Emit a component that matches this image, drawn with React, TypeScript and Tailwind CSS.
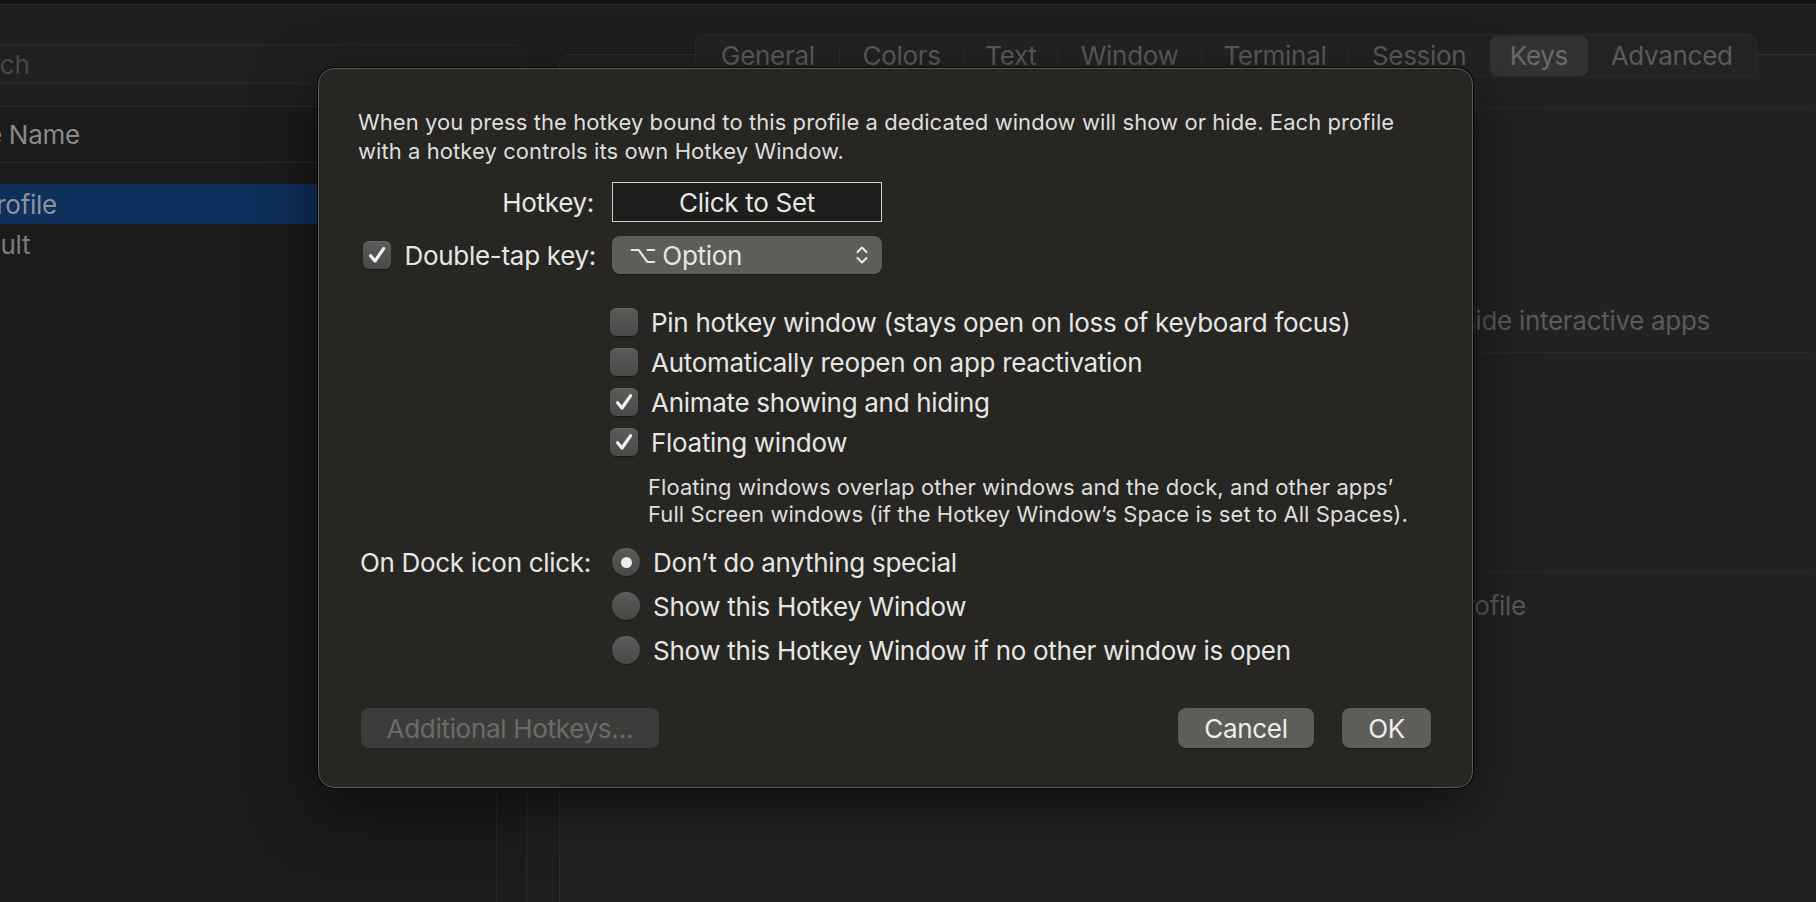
import React from "react";

const tabs = [
  { label: "General", w: "w-[142px]", sep: false },
  { label: "Colors", w: "w-[125px]", sep: true },
  { label: "Text", w: "w-[94px]", sep: true },
  { label: "Window", w: "w-[144px]", sep: true },
  { label: "Terminal", w: "w-[147px]", sep: true },
  { label: "Session", w: "w-[142px]", sep: true },
  { label: "Keys", w: "w-[99px]", sep: false, active: true },
  { label: "Advanced", w: "w-[167px]", sep: false },
];

function CheckMark() {
  return (
    <svg viewBox="0 0 28 28" className="h-[28px] w-[28px]">
      <path
        d="M7.6 14.8l4.4 5.2 8.6-12.4"
        fill="none"
        stroke="#f3f3f1"
        strokeWidth="3.2"
        strokeLinecap="round"
        strokeLinejoin="round"
      />
    </svg>
  );
}

function Checkbox({ checked }: { checked?: boolean }) {
  return (
    <span className="flex h-[28px] w-[28px] shrink-0 items-center justify-center rounded-[6px] bg-gradient-to-b from-[#5b5b59] to-[#4a4a48] shadow-[inset_0_1px_0_rgba(255,255,255,0.07),0_1px_1px_rgba(0,0,0,0.45)]">
      {checked && <CheckMark />}
    </span>
  );
}

function Radio({ on }: { on?: boolean }) {
  return (
    <span className="flex h-[28px] w-[28px] shrink-0 items-center justify-center rounded-full bg-gradient-to-b from-[#5b5b59] to-[#474745] shadow-[inset_0_1px_0_rgba(255,255,255,0.07),0_1px_1px_rgba(0,0,0,0.45)]">
      {on && <span className="h-[11px] w-[11px] rounded-full bg-[#ededeb]" />}
    </span>
  );
}

function UpDown() {
  return (
    <svg viewBox="0 0 14 24" className="h-[24px] w-[14px]">
      <path
        d="M2.5 9L7 4.5 11.5 9M2.5 15L7 19.5 11.5 15"
        fill="none"
        stroke="#ececea"
        strokeWidth="2"
        strokeLinecap="round"
        strokeLinejoin="round"
      />
    </svg>
  );
}

function HotkeyDialog() {
  return (
    <div className="absolute left-[318px] top-[68px] h-[720px] w-[1155px] rounded-[16px] border border-[#5a5956] bg-[#272623] pl-[39px] pr-[41px] pt-[39px] text-[26px] text-[#e6e6e4] shadow-[0_0_0_1px_rgba(0,0,0,0.7),0_18px_60px_rgba(0,0,0,0.55)]">
      <p className="whitespace-nowrap text-[22px] leading-[29px] tracking-[0.07px] text-[#dededc]">
        When you press the hotkey bound to this profile a dedicated window will show or hide. Each profile
        <br />
        with a hotkey controls its own Hotkey Window.
      </p>

      {/* Hotkey */}
      <div className="mt-[16px] flex h-[40px] items-center">
        <span className="w-[236px] text-right">Hotkey:</span>
        <div className="ml-[18px] flex h-[40px] w-[270px] items-center justify-center border-[1.5px] border-[#cfcfcd] bg-[#1e1e1d]">
          Click to Set
        </div>
      </div>

      {/* Double-tap */}
      <div className="mt-[14px] flex h-[38px] items-center">
        <div className="flex w-[238px] items-center justify-end gap-[14px]">
          <Checkbox checked />
          <span>Double-tap key:</span>
        </div>
        <div className="ml-[16px] flex h-[38px] w-[270px] items-center justify-between rounded-[8px] bg-[#5d5d59] pl-[17px] pr-[13px] shadow-[0_1px_1px_rgba(0,0,0,0.4)]">
          <span className="flex items-center gap-[6px]">
            <span className="[font-family:'DejaVu_Sans',sans-serif] text-[24px]">⌥</span>
            <span>Option</span>
          </span>
          <UpDown />
        </div>
      </div>

      {/* Options */}
      <div className="mt-[28px] flex flex-col pl-[252px]">
        {[
          { label: "Pin hotkey window (stays open on loss of keyboard focus)", on: false },
          { label: "Automatically reopen on app reactivation", on: false },
          { label: "Animate showing and hiding", on: true },
          { label: "Floating window", on: true },
        ].map((o) => (
          <div key={o.label} className="flex h-[40px] items-center gap-[13px]">
            <Checkbox checked={o.on} />
            <span>{o.label}</span>
          </div>
        ))}
      </div>
      <p className="mt-[12px] whitespace-nowrap pl-[290px] text-[22px] leading-[27px] tracking-[0.07px] text-[#dededc]">
        Floating windows overlap other windows and the dock, and other apps’
        <br />
        Full Screen windows (if the Hotkey Window’s Space is set to All Spaces).
      </p>

      {/* Dock icon */}
      <div className="mt-[12px] flex">
        <span className="flex h-[44px] w-[236px] items-center justify-end whitespace-nowrap pr-[3px]">
          On Dock icon click:
        </span>
        <div className="ml-[18px] flex flex-col">
          {[
            { label: "Don’t do anything special", on: true },
            { label: "Show this Hotkey Window", on: false },
            { label: "Show this Hotkey Window if no other window is open", on: false },
          ].map((r) => (
            <div key={r.label} className="flex h-[44px] items-center gap-[13px]">
              <Radio on={r.on} />
              <span>{r.label}</span>
            </div>
          ))}
        </div>
      </div>

      {/* Buttons */}
      <div className="mt-[36px] flex items-center">
        <button className="ml-[3px] h-[40px] w-[298px] rounded-[8px] bg-[#3d3c3a] text-[#6c6b69]">
          Additional Hotkeys…
        </button>
        <div className="ml-auto flex gap-[28px]">
          <button className="h-[40px] w-[136px] rounded-[8px] bg-[#5d5d59] text-[#ededeb] shadow-[0_1px_1px_rgba(0,0,0,0.4)]">
            Cancel
          </button>
          <button className="h-[40px] w-[89px] rounded-[8px] bg-[#5d5d59] text-[#ededeb] shadow-[0_1px_1px_rgba(0,0,0,0.4)]">
            OK
          </button>
        </div>
      </div>
    </div>
  );
}

export default function App() {
  return (
    <div className="relative h-[902px] w-[1816px] overflow-hidden bg-[#1e1e1e] text-[26px] tracking-[-0.3px] [font-family:Inter,'Liberation_Sans',sans-serif]">
      <div className="h-[5px] border-b border-[#2a2a2a] bg-[#121212]" />
      <div className="flex h-[897px]">
        {/* Profiles list */}
        <aside className="flex w-[527px] shrink-0 flex-col">
          <div className="mt-[39px] flex h-[40px] items-center overflow-hidden rounded-r-[10px] border border-l-0 border-[#292929] bg-[#202020]">
            <span className="-ml-[55px] whitespace-nowrap text-[#474747]">Search</span>
          </div>
          <div className="mt-[22px] flex flex-1 border-t border-[#2a2a2a] bg-[#1b1b1b]">
            <div className="w-[497px] overflow-hidden border-r border-[#272727]">
              <div className="flex h-[56px] items-center border-b border-[#2c2c2c]">
                <span className="-ml-[75px] whitespace-nowrap text-[#8a8a8a]">Profile Name</span>
              </div>
              <div className="mt-[21px]">
                <div className="flex h-[40px] items-center bg-[#0f2f5c]">
                  <span className="-ml-[20px] whitespace-nowrap text-[#8d939d]">Profile</span>
                </div>
                <div className="flex h-[40px] items-center">
                  <span className="-ml-[56px] whitespace-nowrap text-[#7b7b7b]">Default</span>
                </div>
              </div>
            </div>
            <div className="flex-1 border-r border-[#2c2c2c] bg-[#1c1c1c]" />
          </div>
        </aside>

        {/* Profile settings */}
        <main className="ml-[32px] mt-[49px] flex flex-1 flex-col rounded-tl-[10px] border-l border-t border-[#2d2d2d] bg-[#222222]">
          <nav className="-mt-[21px] ml-[135px] flex h-[43px] w-[1062px] items-center rounded-[9px] border border-[#2b2b2b] bg-[#232323] px-[1px] text-[#5b5b5b]">
            {tabs.map((t) => (
              <div key={t.label} className={`flex h-[40px] items-center ${t.w}`}>
                {t.sep ? <span className="h-[22px] w-px bg-[#2f2f2f]" /> : null}
                <span
                  className={
                    t.active
                      ? "flex h-[40px] flex-1 items-center justify-center rounded-[8px] bg-[#333333] text-[#6b6b6b]"
                      : "flex flex-1 justify-center"
                  }
                >
                  {t.label}
                </span>
              </div>
            ))}
          </nav>
          <div className="ml-[30px] mr-[4px] mt-[31px] border-t border-[#2a2a2a]" />
          <div className="ml-[30px] mt-[191px] flex h-[40px] items-center pl-[851px] text-[#5a5a5a]">
            <span className="whitespace-nowrap">inside interactive apps</span>
          </div>
          <div className="ml-[30px] mr-[4px] mt-[12px] border-t border-[#2a2a2a]" />
          <div className="ml-[30px] mr-[4px] mt-[218px] border-t border-[#2a2a2a]" />
          <div className="ml-[30px] mt-[13px] flex h-[40px] items-center pl-[859px] text-[#5a5a5a]">
            <span className="whitespace-nowrap">Profile</span>
          </div>
        </main>
      </div>

      <HotkeyDialog />
    </div>
  );
}
